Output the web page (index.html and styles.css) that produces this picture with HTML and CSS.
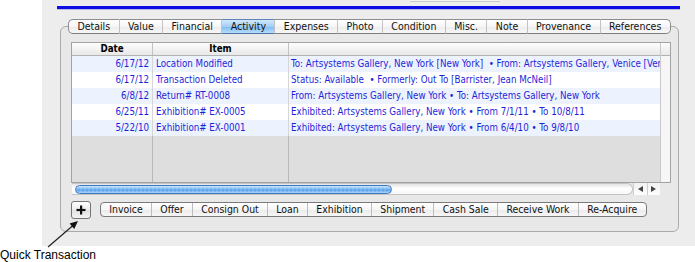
FILE: index.html
```html
<!DOCTYPE html>
<html>
<head>
<meta charset="utf-8">
<link rel="stylesheet" href="styles.css">
</head>
<body>
<div class="panel">
  <div class="topstrip"><div class="topfield"></div></div>
  <div class="blueline"></div>
  <div class="tabbox">
    <div class="tabs">
      <span class="tab">Details</span>
      <span class="tab">Value</span>
      <span class="tab">Financial</span>
      <span class="tab active">Activity</span>
      <span class="tab">Expenses</span>
      <span class="tab">Photo</span>
      <span class="tab">Condition</span>
      <span class="tab">Misc.</span>
      <span class="tab">Note</span>
      <span class="tab">Provenance</span>
      <span class="tab">References</span>
    </div>
    <div class="tablewrap">
      <div class="grid">
        <div class="main">
          <div class="row hdr"><div class="c date">Date</div><div class="c item">Item</div><div class="c desc"></div></div>
          <div class="row odd"><div class="c date">6/17/12</div><div class="c item">Location Modified</div><div class="c desc">To: Artsystems Gallery, New York [New York]  • From: Artsystems Gallery, Venice [Venice]</div></div>
          <div class="row"><div class="c date">6/17/12</div><div class="c item">Transaction Deleted</div><div class="c desc">Status: Available  • Formerly: Out To [Barrister, Jean McNeil]</div></div>
          <div class="row odd"><div class="c date">6/8/12</div><div class="c item">Return# RT-0008</div><div class="c desc">From: Artsystems Gallery, New York • To: Artsystems Gallery, New York</div></div>
          <div class="row"><div class="c date">6/25/11</div><div class="c item">Exhibition# EX-0005</div><div class="c desc">Exhibited: Artsystems Gallery, New York • From 7/1/11 • To 10/8/11</div></div>
          <div class="row odd"><div class="c date">5/22/10</div><div class="c item">Exhibition# EX-0001</div><div class="c desc">Exhibited: Artsystems Gallery, New York • From 6/4/10 • To 9/8/10</div></div>
          <div class="row filler"><div class="c"></div><div class="c"></div><div class="c"></div></div>
        </div>
        <div class="vspare"><div class="vhead"></div></div>
      </div>
      <div class="hscroll">
        <div class="track"><div class="thumb"></div></div>
        <div class="arrows">
          <span class="arr"><svg width="5" height="6" viewBox="0 0 5 6"><path d="M0 3 L5 0 L5 6 Z" fill="#444"/></svg></span>
          <span class="arr"><svg width="5" height="6" viewBox="0 0 5 6"><path d="M5 3 L0 0 L0 6 Z" fill="#444"/></svg></span>
        </div>
      </div>
    </div>
    <div class="actions">
      <div class="plus"><svg width="10" height="10" viewBox="0 0 10 10"><rect x="4" y="0.5" width="2.2" height="9" fill="#111"/><rect x="0.5" y="3.9" width="9" height="2.2" fill="#111"/></svg></div>
      <div class="seg">
        <span>Invoice</span><span>Offer</span><span>Consign Out</span><span>Loan</span><span>Exhibition</span><span>Shipment</span><span>Cash Sale</span><span>Receive Work</span><span>Re-Acquire</span>
      </div>
    </div>
  </div>
</div>
<div class="caption">Quick Transaction</div>
<svg class="arrow" width="695" height="262" viewBox="0 0 695 262">
  <line x1="48" y1="247" x2="73" y2="225.5" stroke="#222" stroke-width="1.2"/>
  <path d="M78 221 L74.2 228.9 L69.6 223.5 Z" fill="#111"/>
</svg>
</body>
</html>
```

FILE: styles.css
```css
html, body {
  margin: 0;
  padding: 0;
}
body {
  width: 695px;
  height: 262px;
  overflow: hidden;
  background: #fff;
  position: relative;
  font-family: "DejaVu Sans Condensed", Lato, "DejaVu Sans", sans-serif;
}
.panel {
  margin-left: 42px;
  height: 246px;
  background: #ededed;
  box-sizing: border-box;
  overflow: hidden;
}
.topstrip {
  height: 2px;
}
.topfield {
  margin-left: 368px;
  width: 90px;
  height: 1px;
  background: #f3f3f3;
  border-bottom: 1px solid #c8c8c8;
}
.blueline {
  margin: 4px 15px 0 15px;
  height: 3px;
  background: #0c0ce4;
  box-shadow: 0 1px 0 #b9b9e6;
}
.tabbox {
  margin: 17px 16px 0 18px;
  height: 206px;
  box-sizing: border-box;
  border: 1px solid #aaaaaa;
  border-radius: 6px;
  background: #e8e8e8;
}
.tabs {
  display: flex;
  margin: -8px 0 0 7px;
  height: 15px;
}
.tab {
  height: 15px;
  box-sizing: border-box;
  padding: 0 8.4px;
  font-size: 10.5px;
  line-height: 13px;
  color: #111;
  border-top: 1px solid #8d8d8d;
  border-bottom: 1px solid #7d7d7d;
  border-right: 1px solid #c2c2c2;
  background: linear-gradient(#ffffff, #f6f6f6 50%, #ececec 51%, #f7f7f7);
  white-space: nowrap;
}
.tab:first-child {
  border-left: 1px solid #8d8d8d;
  border-radius: 5px 0 0 5px;
}
.tab:last-child {
  border-right: 1px solid #8d8d8d;
  border-radius: 0 5px 5px 0;
}
.tab.active {
  background: linear-gradient(#d3e8fc, #a3cef6 50%, #80bbf2 51%, #b5dcfc);
  border-top-color: #5d83b4;
  border-bottom-color: #4d73a4;
}
.tablewrap {
  margin: 8px 0 0 10px;
}
.grid {
  display: flex;
  width: 600px;
  height: 141px;
  box-sizing: border-box;
  border: 1px solid #a3a3a3;
  background: #fff;
}
.main {
  width: 588px;
  display: flex;
  flex-direction: column;
}
.vspare {
  width: 10px;
  box-sizing: border-box;
  border-left: 1px solid #cacaca;
  background: #f6f6f6;
}
.vhead {
  height: 13px;
  box-sizing: border-box;
  border-bottom: 1px solid #b3b3b3;
  background: linear-gradient(#fdfdfd, #e8e8e8);
}
.row {
  display: grid;
  grid-template-columns: 80px 136px 372px;
  height: 16px;
  line-height: 16px;
  font-size: 9.7px;
  color: #1f1fd8;
  background: #fff;
}
.row.odd {
  background: #edf3fe;
}
.c {
  overflow: hidden;
  white-space: pre;
  box-sizing: border-box;
}
.c + .c {
  border-left: 1px solid #d6d6d6;
}
.date {
  text-align: right;
  padding-right: 3px;
}
.item {
  padding-left: 3px;
}
.desc {
  padding-left: 2px;
}
.row.hdr {
  height: 13px;
  line-height: 12px;
  box-sizing: border-box;
  border-bottom: 1px solid #b3b3b3;
  background: linear-gradient(#fdfdfd, #e8e8e8);
  color: #000;
  font-weight: bold;
}
.row.hdr .c {
  text-align: center;
  padding: 0;
}
.row.hdr .c + .c {
  border-left-color: #c3c3c3;
}
.row.filler {
  height: 46px;
  background: #dedede;
}
.row.filler .c + .c {
  border-left-color: #b9b9b9;
}
.hscroll {
  display: flex;
  width: 588px;
  height: 12px;
  margin-left: 1px;
}
.track {
  flex: 1;
  box-sizing: border-box;
  border: 1px solid #c4c4c4;
  border-left: none;
  border-radius: 0 6px 6px 0;
  background: linear-gradient(#e4e4e4, #ffffff 45%, #f7f7f7);
  padding: 1px 0 0 3px;
}
.thumb {
  width: 317px;
  height: 9px;
  box-sizing: border-box;
  border: 1px solid #3f79bf;
  border-radius: 5px;
  background: repeating-linear-gradient(90deg, rgba(255,255,255,0.12) 0 2px, rgba(0,0,0,0) 2px 4px), linear-gradient(#c4e2fb, #78b7f1 45%, #4f9ae6 55%, #a4d3fa);
}
.arrows {
  display: flex;
  width: 27px;
  height: 12px;
  background: linear-gradient(#f1f1f1, #fdfdfd);
}
.arr {
  flex: 1;
  display: flex;
  align-items: center;
  justify-content: center;
  border-left: 1px solid #cdcdcd;
}
.actions {
  display: flex;
  align-items: flex-start;
  margin: 6px 0 0 10px;
}
.plus {
  width: 20px;
  height: 18px;
  box-sizing: border-box;
  border: 1px solid #767676;
  border-radius: 3px;
  background: linear-gradient(#ffffff, #ececec 50%, #e2e2e2 51%, #f3f3f3);
  display: flex;
  align-items: center;
  justify-content: center;
}
.seg {
  display: flex;
  margin: 1px 0 0 9px;
  height: 15px;
  box-sizing: border-box;
  border: 1px solid #7a7a7a;
  border-radius: 4px;
  overflow: hidden;
  background: linear-gradient(#ffffff, #f6f6f6 50%, #ebebeb 51%, #f6f6f6);
}
.seg span {
  padding: 0 8.3px;
  font-size: 10.4px;
  line-height: 13px;
  color: #111;
  white-space: nowrap;
}
.seg span + span {
  border-left: 1px solid #bdbdbd;
}
.caption {
  margin-top: 2px;
  font-family: "Liberation Sans", Arial, sans-serif;
  font-size: 12px;
  line-height: 14px;
  color: #000;
}
.arrow {
  position: absolute;
  left: 0;
  top: 0;
  pointer-events: none;
}
```
